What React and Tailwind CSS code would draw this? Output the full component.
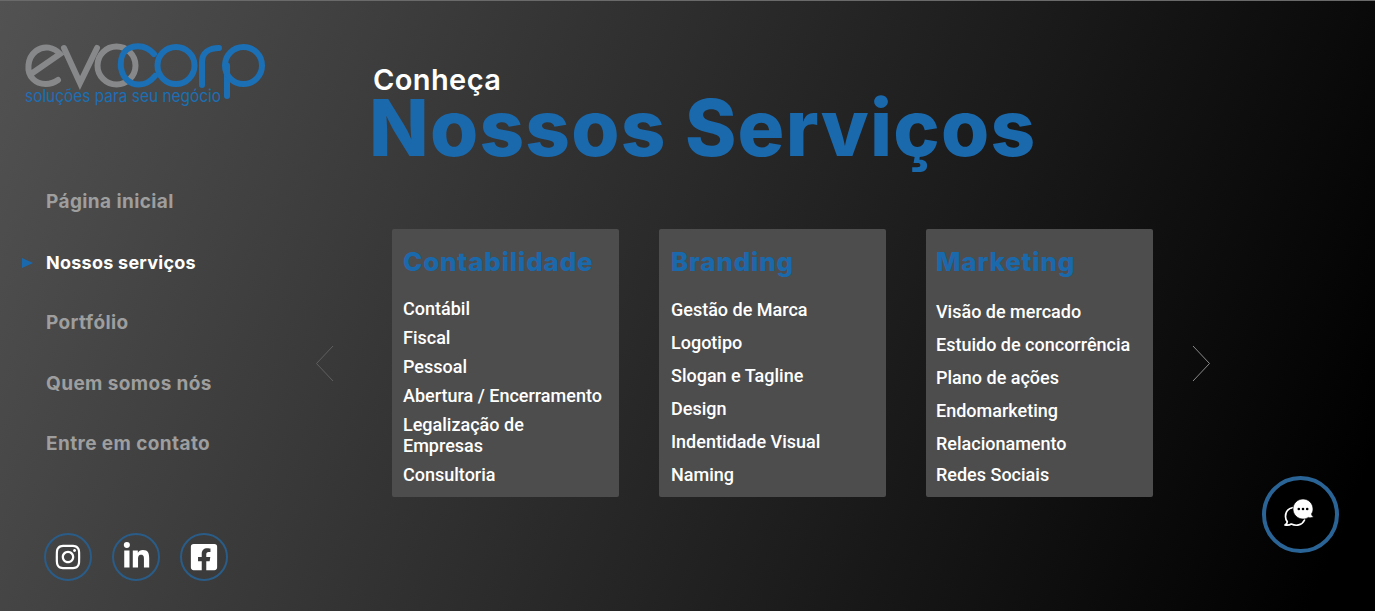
import React from "react";
import { FaLinkedinIn, FaFacebookSquare, FaInstagram } from "react-icons/fa";

const head = { fontFamily: "Inter, 'Open Sans', sans-serif" };

function Logo() {
  const grey = "#87888a";
  const blue = "#1b6fb5";
  return (
    <svg width="270" height="70" viewBox="20 42 270 70" role="img" aria-label="evocorp" className="block" fill="none" strokeWidth="6" strokeLinecap="round">
      <g stroke={grey}>
        <path d="M31 74 L60 54 C54 47 44 45 36 51 C27 58 26 72 33 79 C40 86 51 85 58 80" />
        <path d="M64 48 L80 83 L97 48" />
        <circle cx="116.5" cy="65.5" r="19" />
      </g>
      <g stroke={blue}>
        <path d="M154 54 C148 47 140 45 132 47 C122 50 120 60 121 68 C123 79 131 85 139 84.5 C146 84.5 151 81 155 76" />
        <circle cx="176" cy="65.5" r="18.5" />
        <path d="M202 85 V62 C202 53 209 48 219 48" />
        <path d="M227 96 V65.5" />
        <circle cx="243.5" cy="65.5" r="18.5" />
      </g>
      <text x="25" y="102" textLength="196" lengthAdjust="spacingAndGlyphs" fill={blue} stroke="none" fontSize="17" fontWeight="400" fontFamily="Inter, sans-serif">soluções para seu negócio</text>
    </svg>
  );
}

function NavItem({ label, active }) {
  return (
    <div className="relative h-[60.5px] flex items-center pl-[46px]">
      {active && (
        <span className="absolute left-[22px] top-[25px] w-0 h-0 border-y-[5.5px] border-y-transparent border-l-[11px] border-l-[#1a69ad]" />
      )}
      <span style={head} className={active ? "text-[18px] font-bold tracking-[0.25px] text-white" : "text-[19px] font-bold tracking-[0.4px] text-[#9e9e9e]"}>{label}</span>
    </div>
  );
}

function Social({ children }) {
  return (
    <div className="w-[48px] h-[48px] rounded-full border-2 border-[#2a5c88] flex items-center justify-center text-white">
      {children}
    </div>
  );
}

function Card({ title, items, pad, list }) {
  return (
    <div className={`w-[227px] h-[268px] shrink-0 rounded-[2px] bg-[#4d4d4d] ${pad}`}>
      <h3 style={head} className="text-[26px] leading-[32px] font-extrabold tracking-[0.8px] text-[#1a69ad] mt-[17px]">{title}</h3>
      <ul className={`${list} w-[203px] flex flex-col text-[18px] leading-[21px] font-medium text-white`} style={{ fontFamily: "Roboto, sans-serif" }}>
        {items.map((t) => <li key={t}>{t}</li>)}
      </ul>
    </div>
  );
}

function Chevron({ dir, color }) {
  return (
    <svg width="20" height="37" viewBox="0 0 20 37" fill="none" stroke={color} strokeWidth="1" className="shrink-0">
      <path d={dir === "left" ? "M18 1 L1.5 18.5 L18 36" : "M2 1 L18.5 18.5 L2 36"} />
    </svg>
  );
}

export default function App() {
  return (
    <div className="relative w-full h-[611px] overflow-hidden flex border-t border-[#6a6a6a] bg-[linear-gradient(112deg,#525252_0%,#000000_96%)]">
      <aside className="w-[315px] shrink-0 flex flex-col">
        <div className="mt-[41px] ml-[20px]"><Logo /></div>
        <nav className="mt-[60px] flex flex-col">
          <NavItem label="Página inicial" />
          <NavItem label="Nossos serviços" active />
          <NavItem label="Portfólio" />
          <NavItem label="Quem somos nós" />
          <NavItem label="Entre em contato" />
        </nav>
        <div className="mt-[58px] ml-[44px] flex gap-[20px]">
          <Social><FaInstagram size={28} /></Social>
          <Social><FaLinkedinIn size={29} /></Social>
          <Social><FaFacebookSquare size={30} /></Social>
        </div>
      </aside>
      <main className="flex-1 flex flex-col">
        <div style={head} className="ml-[58px] mt-[62px]">
          <div className="text-[29px] leading-[34px] font-semibold tracking-[0.4px] text-white">Conheça</div>
          <div className="-ml-[4px] text-[78px] leading-[62px] font-extrabold text-[#1a69ad] tracking-[1.2px] whitespace-nowrap">Nossos Serviços</div>
        </div>
        <div className="mt-[70px] flex items-center">
          <Chevron dir="left" color="#5f5f5f" />
          <div className="ml-[57px] flex gap-[40px]">
            <Card title="Contabilidade" pad="pl-[11px]" list="mt-[20px] gap-[8px]" items={["Contábil", "Fiscal", "Pessoal", "Abertura / Encerramento", "Legalização de Empresas", "Consultoria"]} />
            <Card title="Branding" pad="pl-[12px]" list="mt-[21px] gap-[12px]" items={["Gestão de Marca", "Logotipo", "Slogan e Tagline", "Design", "Indentidade Visual", "Naming"]} />
            <Card title="Marketing" pad="pl-[10px]" list="mt-[23px] gap-[12px] [&>li:last-child]:-mt-[2px]" items={["Visão de mercado", "Estuido de concorrência", "Plano de ações", "Endomarketing", "Relacionamento", "Redes Sociais"]} />
          </div>
          <div className="ml-[38px]"><Chevron dir="right" color="#8a8a8a" /></div>
        </div>
      </main>
      <div className="absolute left-[1262px] top-[475px] w-[77px] h-[77px] rounded-full border-[4px] border-[#2a6496] bg-black flex items-center justify-center">
        <svg width="30" height="30" viewBox="0 0 30 30" className="mr-[3px] mb-[3px]">
          <path d="M9 9.500 C4.500 10.500 1.500 14 1.500 18.500 C1.500 20.800 2.300 22.500 3.300 23.800 C3.300 25.300 2.300 26.300 1 27 C3.500 27.500 5.800 27 7.300 26 C12 28.300 18 27.500 20.500 22" fill="none" stroke="#fff" strokeWidth="1.7" strokeLinecap="round" strokeLinejoin="round" />
          <path d="M19 1 C13.500 1 9 5.500 9 11 C9 16.500 13.500 21 19 21 C21 21 22.800 20.400 24.300 19.400 C25.800 19.900 27.800 19.800 29.500 19 C28.200 18.200 27.600 17 27.500 15.800 C28.500 14.400 29 12.800 29 11 C29 5.500 24.500 1 19 1 Z" fill="#fff" stroke="#000" strokeWidth="0.6" />
          <circle cx="14.800" cy="11" r="1.300" fill="#000" />
          <circle cx="19" cy="11" r="1.300" fill="#000" />
          <circle cx="23.200" cy="11" r="1.300" fill="#000" />
        </svg>
      </div>
    </div>
  );
}
